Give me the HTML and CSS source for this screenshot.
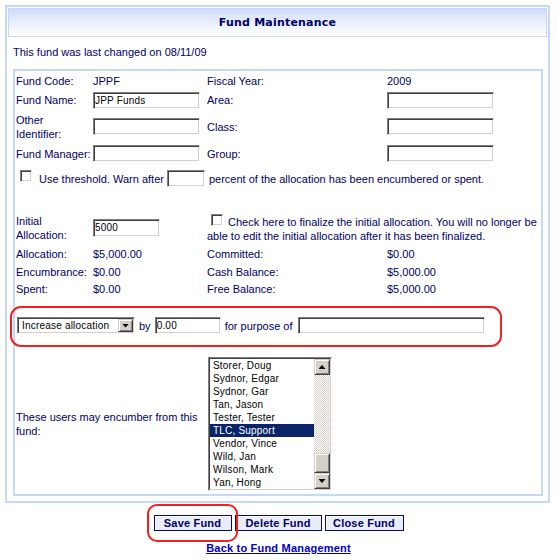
FILE: index.html
```html
<!DOCTYPE html>
<html lang="en">
<head>
<meta charset="utf-8">
<title>Fund Maintenance</title>
<link rel="stylesheet" href="styles.css">
</head>
<body>
<div class="panel">
  <div class="panel-head">Fund Maintenance</div>
  <p class="changed">This fund was last changed on 08/11/09</p>
  <div class="form-box">
    <div class="row h18">
      <span>Fund Code:</span><span>JPPF</span><span>Fiscal Year:</span><span>2009</span>
    </div>
    <div class="row h20">
      <span>Fund Name:</span><span><input class="tb w107" type="text" value="JPP Funds"></span>
      <span>Area:</span><span><input class="tb w107" type="text" value=""></span>
    </div>
    <div class="row h33">
      <span>Other<br>Identifier:</span><span><input class="tb w107" type="text" value=""></span>
      <span>Class:</span><span><input class="tb w107" type="text" value=""></span>
    </div>
    <div class="row h21">
      <span>Fund Manager:</span><span><input class="tb w107" type="text" value=""></span>
      <span>Group:</span><span><input class="tb w107" type="text" value=""></span>
    </div>
    <div class="threshold">
      <input type="checkbox" class="cb cb-th">
      <span>Use threshold. Warn after</span>
      <input class="tb w38 th-input" type="text" value="">
      <span>percent of the allocation has been encumbered or spent.</span>
    </div>
    <div class="row h30 init">
      <span>Initial<br>Allocation:</span>
      <span><input class="tb w67" type="text" value="5000"></span>
      <span class="finalize"><input type="checkbox" class="cb cb-inline">Check here to finalize the initial allocation. You will no longer be able to edit the initial allocation after it has been finalized.</span>
    </div>
    <div class="row h18 mt3">
      <span>Allocation:</span><span>$5,000.00</span><span>Committed:</span><span>$0.00</span>
    </div>
    <div class="row h17">
      <span>Encumbrance:</span><span>$0.00</span><span>Cash Balance:</span><span>$5,000.00</span>
    </div>
    <div class="row h17">
      <span>Spent:</span><span>$0.00</span><span>Free Balance:</span><span>$5,000.00</span>
    </div>
    <div class="adjust">
      <div class="combo">
        <div class="combo-inner">
          <span class="combo-text">Increase allocation</span>
          <span class="win-btn combo-btn"><span class="tri-down"></span></span>
        </div>
      </div>
      <span class="by">by</span>
      <input class="tb w66" type="text" value="0.00">
      <span class="purpose">for purpose of</span>
      <input class="tb w187" type="text" value="">
    </div>
    <div class="users">
      <span>These users may encumber from this fund:</span>
      <div class="listbox">
        <div class="lb-inner">
          <ul class="lb-items">
            <li>Storer, Doug</li>
            <li>Sydnor, Edgar</li>
            <li>Sydnor, Gar</li>
            <li>Tan, Jason</li>
            <li>Tester, Tester</li>
            <li class="sel">TLC, Support</li>
            <li>Vendor, Vince</li>
            <li>Wild, Jan</li>
            <li>Wilson, Mark</li>
            <li>Yan, Hong</li>
          </ul>
          <div class="sb">
            <span class="win-btn sb-btn"><span class="tri-up"></span></span>
            <span class="sb-track"><span class="win-btn sb-thumb"></span></span>
            <span class="win-btn sb-btn"><span class="tri-down"></span></span>
          </div>
        </div>
      </div>
    </div>
  </div>
</div>
<div class="actions">
  <span class="hl"><button class="btn b-save" type="button">Save Fund</button></span>
  <button class="btn b-delete" type="button">Delete Fund</button>
  <button class="btn b-close" type="button">Close Fund</button>
</div>
<p class="back"><a href="#">Back to Fund Management</a></p>
</body>
</html>
```
FILE: styles.css
```css
* { box-sizing: border-box; }

body {
  margin: 0;
  width: 557px;
  background: #fff;
  font-family: "Liberation Sans", Arial, sans-serif;
  font-size: 11px;
  color: #000066;
}

.panel {
  margin: 5px 0 0 5px;
  width: 545px;
  border: 2px solid #c7d7f6;
  padding: 1px 1px 5px 1px;
}

.panel-head {
  height: 29px;
  border: 1px solid #c7d7f6;
  background: linear-gradient(#cfdcf9 0%, #dfe8fb 30%, #ffffff 100%);
  text-align: center;
  font-family: "DejaVu Sans", Verdana, sans-serif;
  font-weight: bold;
  font-size: 11px;
  letter-spacing: 0.2px;
  line-height: 27px;
  color: #000066;
}

.changed {
  margin: 8px 0 0 5px;
  line-height: 14px;
}

.form-box {
  margin: 10px 4px 0 5px;
  border: 2px solid #c7d7f6;
  padding: 1px 1px 3px 1px;
}

.row {
  display: grid;
  grid-template-columns: 77px 114px 180px 1fr;
  align-items: center;
  line-height: 14px;
}
.h17 { height: 17px; }
.h18 { height: 18px; }
.h20 { height: 20px; }
.h21 { height: 21px; }
.h30 { height: 30px; }
.h33 { height: 33px; }
.mt3 { margin-top: 3px; }

.init { margin-top: 23px; }
.finalize {
  grid-column: 3 / 5;
  padding-top: 2px;
}

.tb {
  display: block;
  margin: 0;
  height: 17px;
  padding: 0 0 0 1px;
  border: 1px solid;
  border-color: #808080 #ffffff #ffffff #808080;
  box-shadow: inset 1px 1px #404040, inset -1px -1px #d4d0c8;
  background: #fff;
  font-family: "Liberation Sans", Arial, sans-serif;
  font-size: 10px;
  letter-spacing: 0.2px;
  color: #000;
  outline: none;
}
.w38 { width: 38px; }
.w66 { width: 66px; }
.w67 { width: 67px; height: 18px; }
.w107 { width: 107px; }
.w187 { width: 187px; }

.cb {
  appearance: none;
  -webkit-appearance: none;
  display: inline-block;
  width: 12px;
  height: 12px;
  margin: 0;
  border: 1px solid;
  border-color: #808080 #ffffff #ffffff #808080;
  box-shadow: inset 1px 1px #404040, inset -1px -1px #d4d0c8;
  background: #fff;
}
.cb-inline { margin: 0 5px 0 4px; }

.threshold {
  display: flex;
  align-items: center;
  height: 21px;
  margin-top: 4px;
  padding-left: 4px;
}
.cb-th { align-self: flex-start; margin: 2px 7px 0 0; }
.th-input { margin: 0 4px 0 3px; }

.adjust {
  position: relative;
  display: flex;
  align-items: center;
  height: 19px;
  margin-top: 19px;
  padding-left: 1px;
}
.adjust::before {
  content: "";
  position: absolute;
  left: -6px;
  top: -10px;
  width: 488px;
  height: 37px;
  border: 2px solid #f42020;
  border-radius: 11px;
}
.by { margin: 0 4px 0 4px; }
.purpose { margin: 0 5px 0 4px; }

.combo {
  width: 118px;
  height: 17px;
  border: 1px solid;
  border-color: #808080 #ffffff #ffffff #808080;
  background: #fff;
}
.combo-inner {
  display: flex;
  height: 100%;
  border: 1px solid;
  border-color: #404040 #d4d0c8 #d4d0c8 #404040;
}
.combo-text {
  flex: 1;
  padding-left: 3px;
  font-size: 10px;
  letter-spacing: 0.2px;
  line-height: 13px;
  color: #000;
}

.win-btn {
  display: flex;
  align-items: center;
  justify-content: center;
  background: #d4d0c8;
  border: 1px solid;
  border-color: #d4d0c8 #404040 #404040 #d4d0c8;
  box-shadow: inset 1px 1px #ffffff, inset -1px -1px #808080;
}
.combo-btn { width: 15px; }

.tri-down, .tri-up {
  display: block;
  width: 7px;
  height: 4px;
  background: #000;
}
.tri-down { clip-path: polygon(0 0, 100% 0, 50% 100%); }
.tri-up { clip-path: polygon(50% 0, 100% 100%, 0 100%); }

.users {
  display: grid;
  grid-template-columns: 192px auto;
  align-items: center;
  margin-top: 22px;
  line-height: 14px;
}

.listbox {
  width: 124px;
  height: 134px;
  border: 1px solid;
  border-color: #808080 #ffffff #ffffff #808080;
  background: #fff;
}
.lb-inner {
  display: flex;
  height: 100%;
  border: 1px solid;
  border-color: #404040 #d4d0c8 #d4d0c8 #404040;
}
.lb-items {
  flex: 1;
  margin: 0;
  padding: 0;
  list-style: none;
  font-size: 10px;
  letter-spacing: 0.2px;
  line-height: 13px;
  color: #000;
}
.lb-items li { height: 13px; padding-left: 3px; white-space: nowrap; }
.lb-items li.sel { background: #0a246a; color: #fff; }

.sb {
  display: flex;
  flex-direction: column;
  width: 16px;
}
.sb-btn { height: 16px; flex: none; }
.sb-track {
  flex: 1;
  display: flex;
  flex-direction: column;
  justify-content: flex-end;
  background: repeating-conic-gradient(#d4d0c8 0 25%, #ffffff 0 50%) 0 0 / 2px 2px;
}
.sb-thumb { height: 20px; }

.actions {
  display: flex;
  justify-content: center;
  gap: 3px;
  margin-top: 12px;
}
.hl { position: relative; display: flex; }
.hl::after {
  content: "";
  position: absolute;
  left: -7px;
  top: -11px;
  width: 87px;
  height: 34px;
  border: 2px solid #f42020;
  border-radius: 10px;
}

.btn {
  height: 16px;
  margin: 0;
  padding: 0;
  border: 1px solid #0c0c5c;
  box-shadow: inset 1px 1px #ffffff;
  background: #e9edf9;
  font-family: "Liberation Sans", Arial, sans-serif;
  font-weight: bold;
  font-size: 11px;
  letter-spacing: 0.2px;
  line-height: 14px;
  color: #000066;
  text-align: center;
}
.b-save { width: 78px; }
.b-delete { width: 87px; }
.b-close { width: 79px; }

.back {
  margin: 10px 0 0 0;
  text-align: center;
  line-height: 14px;
}
.back a {
  font-weight: bold;
  letter-spacing: 0.2px;
  color: #0000cc;
  text-decoration: underline;
}
```
